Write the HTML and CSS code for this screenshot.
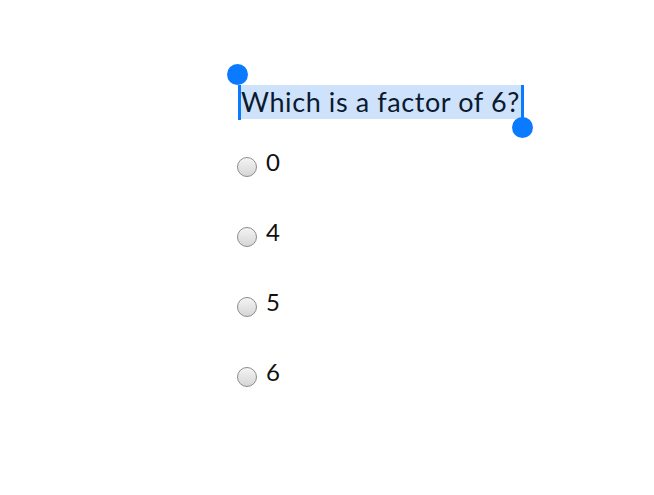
FILE: index.html
```html
<!DOCTYPE html>
<html lang="en">
<head>
    <meta charset="UTF-8">
    <meta name="viewport" content="width=device-width, initial-scale=1.0">
    <title>Quiz</title>
    <link rel="stylesheet" href="styles.css">
</head>
<body>
    <div class="quiz">
        <!-- Question with text selection -->
        <div class="question-row">
            <span class="question">Which is a factor of 6?<span class="handle handle-start"></span><span class="handle handle-end"></span></span>
        </div>

        <ul class="options">
            <li class="option"><input type="radio" name="answer" class="radio"><span class="label">0</span></li>
            <li class="option"><input type="radio" name="answer" class="radio"><span class="label">4</span></li>
            <li class="option"><input type="radio" name="answer" class="radio"><span class="label">5</span></li>
            <li class="option"><input type="radio" name="answer" class="radio"><span class="label">6</span></li>
        </ul>
    </div>
</body>
</html>
```

FILE: styles.css
```css
body {
    margin: 0;
    font-family: Lato, "Open Sans", sans-serif;
    background-color: #ffffff;
    color: #0b1a30;
}
.quiz {
    padding: 85px 0 0 238px;
}
.question-row {
    height: 34px;
}
.question {
    position: relative;
    display: inline-block;
    font-size: 27px;
    line-height: 34px;
    letter-spacing: 0.6px;
    padding: 0 1px 0 3px;
    background-color: #cfe2fb;
    color: #0b1a30;
}
.handle {
    position: absolute;
    width: 3px;
    background-color: #0a7aff;
}
.handle::after {
    content: "";
    position: absolute;
    width: 21px;
    height: 21px;
    border-radius: 50%;
    background-color: #0a7aff;
}
.handle-start {
    left: 0;
    top: 0;
    height: 35px;
}
.handle-start::after {
    left: -11px;
    top: -21px;
}
.handle-end {
    right: -3px;
    top: 0;
    height: 40px;
}
.handle-end::after {
    left: -9px;
    top: 32px;
}
.options {
    list-style: none;
    margin: 0;
    padding: 13px 0 0 0;
}
.option {
    display: flex;
    align-items: center;
    height: 70px;
    font-size: 24px;
    color: #111;
}
.radio {
    appearance: none;
    -webkit-appearance: none;
    width: 20px;
    height: 20px;
    margin: 0 9px 0 -1px;
    border: 1px solid #8c8c8c;
    border-radius: 50%;
    background: linear-gradient(#f4f4f4, #d6d6d6);
}
.label {
    line-height: 30px;
    margin-top: -11px;
}
```
